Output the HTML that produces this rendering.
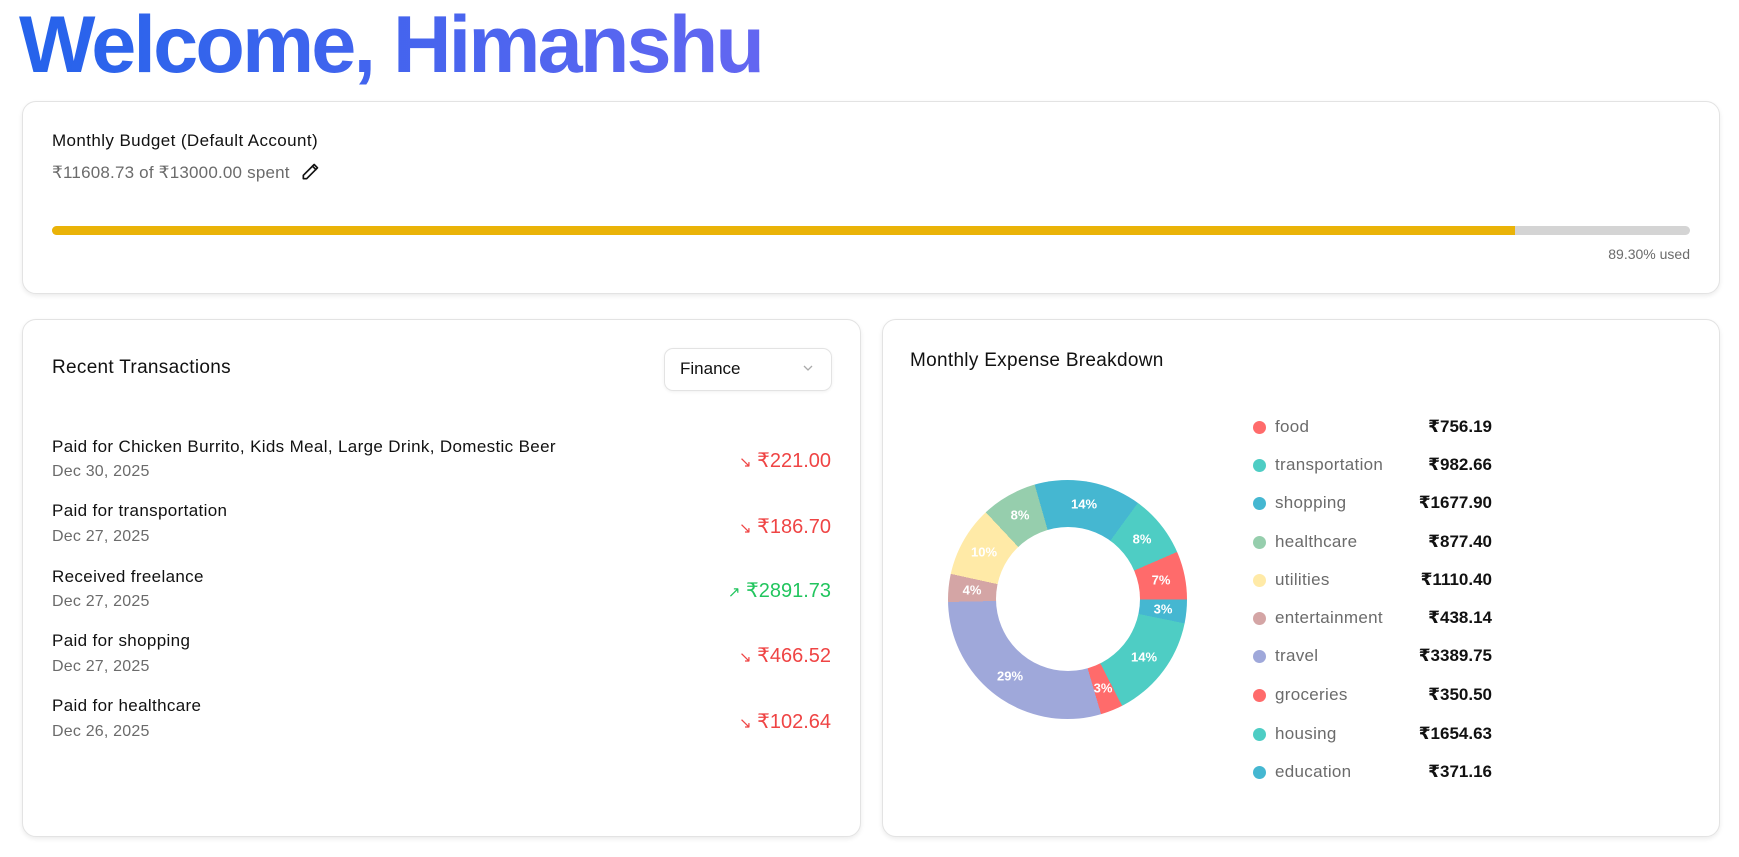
<!DOCTYPE html>
<html><head><meta charset="utf-8"><style>
*{margin:0;padding:0;box-sizing:border-box}
body{width:1739px;height:857px;background:#fff;font-family:"Liberation Sans","DejaVu Sans",sans-serif;position:relative;overflow:hidden;color:#111}
.abs{position:absolute;white-space:nowrap}
h1{position:absolute;left:19px;top:-1px;font-size:81px;font-weight:bold;letter-spacing:-2.8px;background:linear-gradient(90deg,#2563eb,#6366f1);-webkit-background-clip:text;background-clip:text;color:transparent;white-space:nowrap}
.card{position:absolute;border:1px solid #e3e3e3;border-radius:14px;box-shadow:0 2px 5px rgba(0,0,0,.08);background:#fff}
.t{font-size:17px;color:#111;letter-spacing:.35px}
.d{font-size:16px;color:#6b6b6b;letter-spacing:.2px}
.amt{font-size:20px;text-align:right;right:908px}
.red{color:#ef4444}.grn{color:#22c55e}
.lg{font-size:17px;color:#6b6b6b;letter-spacing:.3px}
.lv{font-size:17px;color:#111;font-weight:bold;text-align:right}
.dot{position:absolute;width:13px;height:13px;border-radius:50%}
.pl{position:absolute;color:#fff;font-weight:bold;font-size:13px;transform:translate(-50%,-50%);white-space:nowrap}
</style></head><body>
<h1>Welcome, Himanshu</h1>

<div class="card" style="left:22px;top:101px;width:1698px;height:193px"></div>
<div class="abs" style="left:52px;top:131px;font-size:17px;letter-spacing:.4px">Monthly Budget (Default Account)</div>
<div class="abs" style="left:52px;top:163px;font-size:17px;color:#6b6b6b;letter-spacing:.2px">₹11608.73 of ₹13000.00 spent</div>
<svg class="abs" style="left:300px;top:162px" width="20" height="20" viewBox="0 0 24 24" fill="none" stroke="#111" stroke-width="2" stroke-linecap="round" stroke-linejoin="round"><path d="M17 3l4 4L8 20H4v-4L17 3z"/><path d="M15 5l4 4"/></svg>
<div class="abs" style="left:52px;top:226px;width:1638px;height:9px;background:#d4d4d4;border-radius:5px"></div>
<div class="abs" style="left:52px;top:226px;width:1463px;height:9px;background:#eab308;border-radius:5px 0 0 5px"></div>
<div class="abs" style="right:49px;top:246px;font-size:14px;color:#6b6b6b">89.30% used</div>

<div class="card" style="left:22px;top:319px;width:839px;height:518px"></div>
<div class="abs" style="left:52px;top:357px;font-size:19px;letter-spacing:.3px">Recent Transactions</div>
<div class="abs" style="left:664px;top:348px;width:168px;height:43px;border:1px solid #e3e3e3;border-radius:9px;box-shadow:0 1px 3px rgba(0,0,0,.06)"></div>
<div class="abs" style="left:680px;top:359px;font-size:17px">Finance</div>
<svg class="abs" style="left:802px;top:363px" width="12" height="10" viewBox="0 0 12 10" fill="none" stroke="#aaa" stroke-width="1.3"><path d="M2 3l4 4 4-4"/></svg>

<div class="abs t" style="left:52px;top:437px">Paid for Chicken Burrito, Kids Meal, Large Drink, Domestic Beer</div>
<div class="abs d" style="left:52px;top:463px">Dec 30, 2025</div>
<div class="abs amt red" style="top:448px"><span style="font-size:15px">↘</span> ₹221.00</div>
<div class="abs t" style="left:52px;top:501px">Paid for transportation</div>
<div class="abs d" style="left:52px;top:528px">Dec 27, 2025</div>
<div class="abs amt red" style="top:514px"><span style="font-size:15px">↘</span> ₹186.70</div>
<div class="abs t" style="left:52px;top:567px">Received freelance</div>
<div class="abs d" style="left:52px;top:593px">Dec 27, 2025</div>
<div class="abs amt grn" style="top:578px"><span style="font-size:15px">↗</span> ₹2891.73</div>
<div class="abs t" style="left:52px;top:631px">Paid for shopping</div>
<div class="abs d" style="left:52px;top:658px">Dec 27, 2025</div>
<div class="abs amt red" style="top:643px"><span style="font-size:15px">↘</span> ₹466.52</div>
<div class="abs t" style="left:52px;top:696px">Paid for healthcare</div>
<div class="abs d" style="left:52px;top:723px">Dec 26, 2025</div>
<div class="abs amt red" style="top:709px"><span style="font-size:15px">↘</span> ₹102.64</div>

<div class="card" style="left:882px;top:319px;width:838px;height:518px"></div>
<div class="abs" style="left:910px;top:350px;font-size:19px;letter-spacing:.3px">Monthly Expense Breakdown</div>

<div class="abs" style="left:948px;top:480px;width:239px;height:239px;border-radius:50%;background:conic-gradient(from 90deg,#45b7d1 0 3.2%,#4ecdc4 3.2% 17.45%,#ff6b6b 17.45% 20.47%,#9fa8da 20.47% 49.67%,#d4a5a5 49.67% 53.44%,#ffeaa7 53.44% 63.01%,#96cead 63.01% 70.57%,#45b7d1 70.57% 85.02%,#4ecdc4 85.02% 93.48%,#ff6b6b 93.48% 100%)"></div>
<div class="abs" style="left:995.5px;top:527px;width:144px;height:144px;border-radius:50%;background:#fff"></div>
<div class="pl" style="left:1161px;top:580px">7%</div>
<div class="pl" style="left:1142px;top:539px">8%</div>
<div class="pl" style="left:1084px;top:504px">14%</div>
<div class="pl" style="left:1020px;top:515px">8%</div>
<div class="pl" style="left:984px;top:552px">10%</div>
<div class="pl" style="left:972px;top:590px">4%</div>
<div class="pl" style="left:1010px;top:676px">29%</div>
<div class="pl" style="left:1103px;top:688px">3%</div>
<div class="pl" style="left:1144px;top:657px">14%</div>
<div class="pl" style="left:1163px;top:609px">3%</div>

<div class="dot" style="left:1253px;top:421px;background:#ff6b6b"></div><div class="abs lg" style="left:1275px;top:417px">food</div><div class="abs lv" style="right:247px;top:417px">₹756.19</div>
<div class="dot" style="left:1253px;top:459px;background:#4ecdc4"></div><div class="abs lg" style="left:1275px;top:455px">transportation</div><div class="abs lv" style="right:247px;top:455px">₹982.66</div>
<div class="dot" style="left:1253px;top:497px;background:#45b7d1"></div><div class="abs lg" style="left:1275px;top:493px">shopping</div><div class="abs lv" style="right:247px;top:493px">₹1677.90</div>
<div class="dot" style="left:1253px;top:536px;background:#96cead"></div><div class="abs lg" style="left:1275px;top:532px">healthcare</div><div class="abs lv" style="right:247px;top:532px">₹877.40</div>
<div class="dot" style="left:1253px;top:574px;background:#ffeaa7"></div><div class="abs lg" style="left:1275px;top:570px">utilities</div><div class="abs lv" style="right:247px;top:570px">₹1110.40</div>
<div class="dot" style="left:1253px;top:612px;background:#d4a5a5"></div><div class="abs lg" style="left:1275px;top:608px">entertainment</div><div class="abs lv" style="right:247px;top:608px">₹438.14</div>
<div class="dot" style="left:1253px;top:650px;background:#9fa8da"></div><div class="abs lg" style="left:1275px;top:646px">travel</div><div class="abs lv" style="right:247px;top:646px">₹3389.75</div>
<div class="dot" style="left:1253px;top:689px;background:#ff6b6b"></div><div class="abs lg" style="left:1275px;top:685px">groceries</div><div class="abs lv" style="right:247px;top:685px">₹350.50</div>
<div class="dot" style="left:1253px;top:728px;background:#4ecdc4"></div><div class="abs lg" style="left:1275px;top:724px">housing</div><div class="abs lv" style="right:247px;top:724px">₹1654.63</div>
<div class="dot" style="left:1253px;top:766px;background:#45b7d1"></div><div class="abs lg" style="left:1275px;top:762px">education</div><div class="abs lv" style="right:247px;top:762px">₹371.16</div>
</body></html>
